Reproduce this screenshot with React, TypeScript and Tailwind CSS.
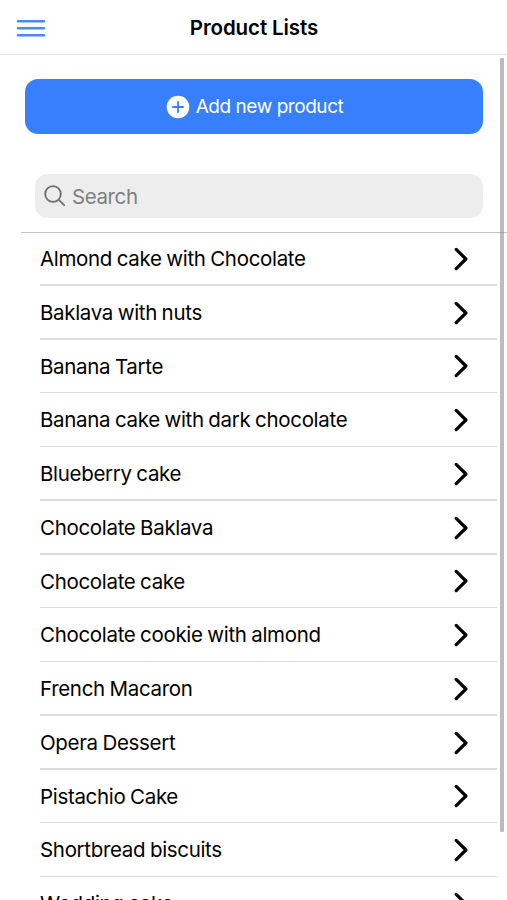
import React, { useState } from 'react';

const products = [
  'Almond cake with Chocolate',
  'Baklava with nuts',
  'Banana Tarte',
  'Banana cake with dark chocolate',
  'Blueberry cake',
  'Chocolate Baklava',
  'Chocolate cake',
  'Chocolate cookie with almond',
  'French Macaron',
  'Opera Dessert',
  'Pistachio Cake',
  'Shortbread biscuits',
  'Wedding cake',
];

const MenuIcon = () => (
  <svg width="30" height="20" viewBox="0 0 30 20" fill="none" stroke="#4a88f4" strokeWidth="2.5" strokeLinecap="round">
    <path d="M2 3.2h26M2 10.3h26M2 17.3h26" />
  </svg>
);

const AddCircleIcon = () => (
  <svg width="24" height="24" viewBox="0 0 24 24" fill="none">
    <circle cx="12" cy="12" r="11.3" fill="#fff" />
    <path d="M12 6.9v10.2M6.9 12h10.2" stroke="#387ffe" strokeWidth="1.8" strokeLinecap="round" />
  </svg>
);

const SearchIcon = () => (
  <svg width="22" height="22" viewBox="0 0 22 22" fill="none" stroke="#6f6f6f" strokeWidth="1.8" strokeLinecap="round">
    <circle cx="9" cy="9" r="7.8" />
    <path d="M14.8 14.8l5.4 5.4" />
  </svg>
);

const ChevronIcon = () => (
  <svg width="14" height="24" viewBox="0 0 14 24" fill="none" stroke="#000" strokeWidth="3.2" strokeLinecap="round" strokeLinejoin="round">
    <path d="M2.2 2.4L11.9 12l-9.7 9.6" />
  </svg>
);

interface ProductRowProps {
  name: string;
}

const ProductRow: React.FC<ProductRowProps> = ({ name }) => (
  <li className="flex h-[53.75px] flex-col">
    <button type="button" className="flex min-h-0 flex-1 items-center justify-between pt-[1.5px] pr-[29px] text-left">
      <span className="pt-px text-[20.5px] tracking-[-0.32px] whitespace-nowrap [word-spacing:-0.8px]">{name}</span>
      <ChevronIcon />
    </button>
    <div className="h-[1.5px] shrink-0 bg-[#dcdcdc]" />
  </li>
);

export default function App() {
  const [query, setQuery] = useState('');

  const visible = products.filter((name) => name.toLowerCase().includes(query.trim().toLowerCase()));

  return (
    <div className="relative flex h-[900px] w-full flex-col overflow-hidden bg-white font-[Inter,'Liberation_Sans',sans-serif] text-black">
      {/* Toolbar */}
      <header className="grid h-[55px] shrink-0 grid-cols-[1fr_auto_1fr] items-center border-b border-[#e2e2e2] pl-4">
        <button type="button" aria-label="Menu" className="justify-self-start pt-[2px]">
          <MenuIcon />
        </button>
        <h1 className="-ml-[15px] pt-[2px] text-[20.5px] font-semibold tracking-[-0.1px]">Product Lists</h1>
      </header>

      <main className="min-h-0 flex-1 overflow-hidden">
        <div className="pt-6 pr-6 pl-[25px]">
          <button
            type="button"
            className="flex h-[55px] w-full items-center justify-center gap-[6px] rounded-[13px] bg-[#387ffe] pl-px text-[19px] tracking-[-0.45px] text-white"
          >
            <AddCircleIcon />
            <span className="pt-[2px]">Add new product</span>
          </button>

          <label className="mt-10 ml-[10px] flex h-[44px] items-center gap-[6px] rounded-[13px] bg-[#ededed] pl-[9px]">
            <SearchIcon />
            <input
              value={query}
              onChange={(e) => setQuery(e.target.value)}
              placeholder="Search"
              className="min-w-0 flex-1 bg-transparent pt-[2px] text-[20.5px] tracking-[-0.4px] outline-none placeholder:text-[#7f7f7f]"
            />
          </label>
        </div>

        {/* Product list */}
        <div className="mt-[14px] ml-[21px] border-t border-[#c4c4c4]">
          <ul className="-mt-px mr-[10px] ml-[19px]">
            {visible.map((name) => (
              <ProductRow key={name} name={name} />
            ))}
          </ul>
        </div>
      </main>

      {/* Scroll indicator */}
      <div className="absolute top-[58px] right-[3px] h-[774px] w-[4px] rounded-[1px] bg-[#777777]/50" />
    </div>
  );
}
